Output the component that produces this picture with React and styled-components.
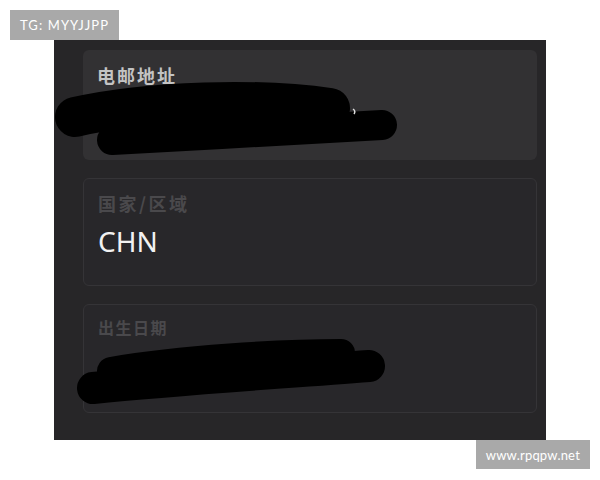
import React from 'react';
import styled, { createGlobalStyle } from 'styled-components';

const GlobalStyle = createGlobalStyle`
	body {
		margin: 0;
		background: #ffffff;
		font-family: "Noto Sans", "Noto Sans CJK SC", sans-serif;
	}
`;

const Page = styled.div`
	width: 600px;
	height: 480px;
	display: flex;
	flex-direction: column;
`;

const Tag = styled.div`
	height: ${(p) => p.h}px;
	padding: 0 10px;
	display: flex;
	align-items: center;
	background: #a9a9a9;
	color: #ffffff;
	font-family: "Lato", "Open Sans", sans-serif;
	font-size: 13px;
	letter-spacing: ${(p) => p.spacing}px;
`;

const TopRow = styled.div`
	display: flex;
	padding: 10px 0 0 10px;
`;

const BottomRow = styled.div`
	display: flex;
	justify-content: flex-end;
	padding-right: 10px;
`;

const Panel = styled.div`
	margin-left: 54px;
	width: 492px;
	height: 400px;
	box-sizing: border-box;
	padding: 10px 9px 0 29px;
	background: #272628;
	display: flex;
	flex-direction: column;
	gap: 18px;
`;

const Card = styled.div`
	position: relative;
	height: ${(p) => p.h}px;
	box-sizing: border-box;
	padding: ${(p) => p.pt}px 14px 0;
	border-radius: 6px;
	background: ${(p) => (p.filled ? '#323133' : '#28272a')};
	border: ${(p) => (p.filled ? 'none' : '1.5px solid #353437')};
`;

const Label = styled.div`
	font-family: "Noto Sans CJK SC", sans-serif;
	font-weight: 700;
	font-size: ${(p) => p.size}px;
	line-height: 20px;
	letter-spacing: ${(p) => p.spacing}px;
	color: ${(p) => p.color};
`;

const Value = styled.div`
	margin-top: 10px;
	font-family: "Noto Sans", sans-serif;
	font-size: 28px;
	line-height: 36px;
	color: #f2f2f2;
`;

const Scribble = styled.svg`
	position: absolute;
	left: -30px;
	top: 0;
	overflow: visible;
`;

export default function App() {
	return (
		<Page>
			<GlobalStyle />
			<TopRow>
				<Tag h={30} spacing={1.1}>TG: MYYJJPP</Tag>
			</TopRow>
			<Panel>
				<Card filled h={110} pt={15}>
					<Label size={18} spacing={2} color="#c3c3c3">电邮地址</Label>
					<Scribble width="360" height="120">
						<path d="M 22 67 C 97 50, 207 48, 277 58" stroke="#000" strokeWidth="40" strokeLinecap="round" fill="none" />
						<path d="M 59 90 C 147 85, 247 80, 329 75" stroke="#000" strokeWidth="30" strokeLinecap="round" fill="none" />
						<path d="M 300 59 q 3 2 1 5" stroke="#ddd" strokeWidth="1.5" fill="none" />
					</Scribble>
				</Card>
				<Card h={108} pt={14}>
					<Label size={18} spacing={2.5} color="#4a494c">国家/区域</Label>
					<Value>CHN</Value>
				</Card>
				<Card h={109} pt={12}>
					<Label size={16} spacing={1.5} color="#4a494c">出生日期</Label>
					<Scribble width="360" height="120">
						<path d="M 57 66 C 127 54, 227 48, 287 48" stroke="#000" strokeWidth="28" strokeLinecap="round" fill="none" />
						<path d="M 39 83 C 127 74, 227 68, 315 61" stroke="#000" strokeWidth="32" strokeLinecap="round" fill="none" />
					</Scribble>
				</Card>
			</Panel>
			<BottomRow>
				<Tag h={29} spacing={0.2}>www.rpqpw.net</Tag>
			</BottomRow>
		</Page>
	);
}
